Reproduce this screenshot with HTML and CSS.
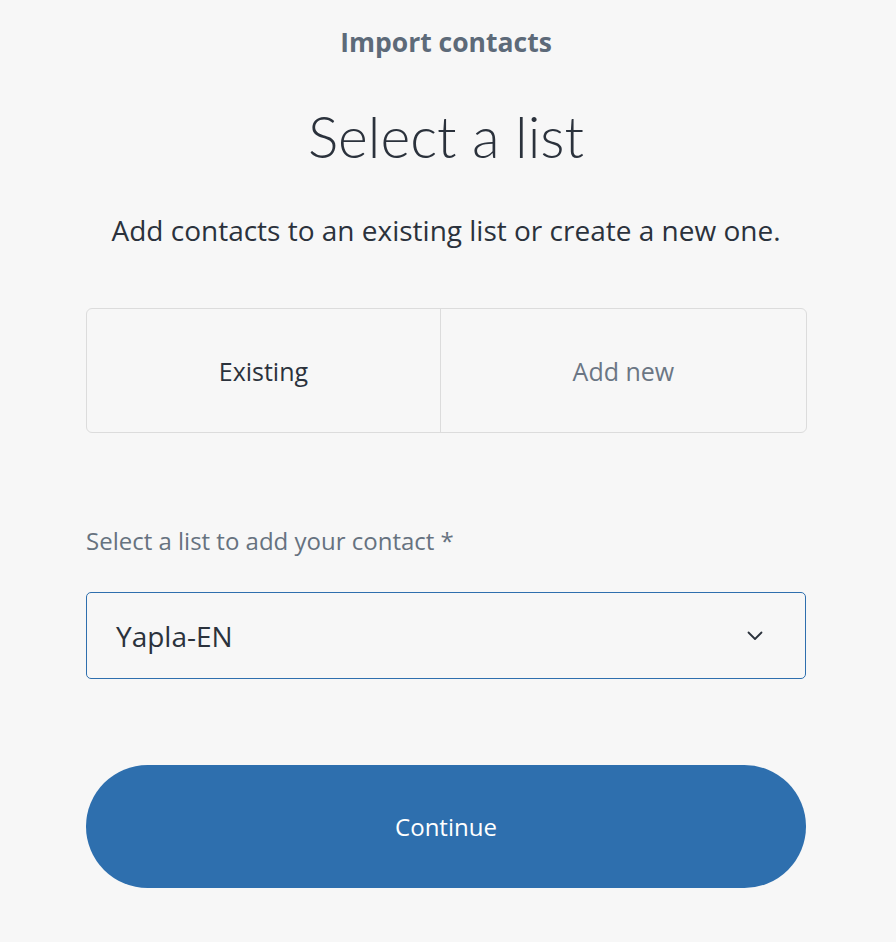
FILE: index.html
```html
<!DOCTYPE html>
<html lang="en">
<head>
<meta charset="utf-8">
<title>Import contacts</title>
<link rel="stylesheet" href="styles.css">
</head>
<body>
<main class="page">
  <header class="head">
    <div class="kicker">Import contacts</div>
    <h1 class="title">Select a list</h1>
    <p class="lead">Add contacts to an existing list or create a new one.</p>
  </header>
  <div class="tabs">
    <button class="tab tab-active">Existing</button>
    <button class="tab">Add new</button>
  </div>
  <div class="field">
    <label class="label">Select a list to add your contact *</label>
    <div class="select">
      <span class="select-value">Yapla-EN</span>
      <svg class="chev" width="16" height="10" viewBox="0 0 16 10"><path d="M1.5 1.5 L8 8 L14.5 1.5" fill="none" stroke="#2b323c" stroke-width="1.8" stroke-linecap="round" stroke-linejoin="round"/></svg>
    </div>
  </div>
  <button class="continue">Continue</button>
</main>
</body>
</html>
```
FILE: styles.css
```css
html, body {
  margin: 0;
  padding: 0;
  background: #f7f7f7;
}
body {
  font-family: "Open Sans", "Lato", sans-serif;
  color: #2b323c;
}
.page {
  width: 720px;
  margin: 0 0 0 86px;
  padding-top: 26px;
  display: flex;
  flex-direction: column;
}
.head {
  display: flex;
  flex-direction: column;
  align-items: center;
  text-align: center;
}
.kicker {
  font-size: 26.5px;
  font-weight: 700;
  color: #5d6a79;
  line-height: 32px;
}
.title {
  margin: 43px 0 0;
  font-family: "Lato", sans-serif;
  font-size: 57px;
  font-weight: 300;
  line-height: 70px;
  color: #2b323c;
}
.lead {
  margin: 41px 0 0;
  font-size: 28px;
  line-height: 36px;
  color: #2b323c;
  white-space: nowrap;
}
.tabs {
  margin-top: 60px;
  width: 721px;
  height: 125px;
  display: flex;
  border: 1px solid #dcdcdc;
  border-radius: 6px;
  box-sizing: border-box;
  overflow: hidden;
}
.tab {
  flex: 1 1 auto;
  border: 0;
  background: transparent;
  font-family: inherit;
  font-size: 25px;
  color: #6b7684;
  padding: 0;
}
.tab + .tab {
  border-left: 1px solid #dcdcdc;
}
.tab-active {
  color: #2b323c;
}
.field {
  margin-top: 92px;
  display: flex;
  flex-direction: column;
}
.label {
  font-size: 24px;
  line-height: 32px;
  color: #66727f;
}
.select {
  margin-top: 35px;
  height: 87px;
  box-sizing: border-box;
  border: 1px solid #2e6fae;
  border-radius: 5px;
  display: flex;
  align-items: center;
  justify-content: space-between;
  padding: 0 42px 0 29px;
}
.select-value {
  font-size: 28px;
  color: #2b323c;
}
.chev {
  display: block;
}
.continue {
  margin-top: 86px;
  height: 123px;
  border: 0;
  border-radius: 62px;
  background: #2e6fae;
  color: #ffffff;
  font-family: inherit;
  font-size: 24px;
}
```
